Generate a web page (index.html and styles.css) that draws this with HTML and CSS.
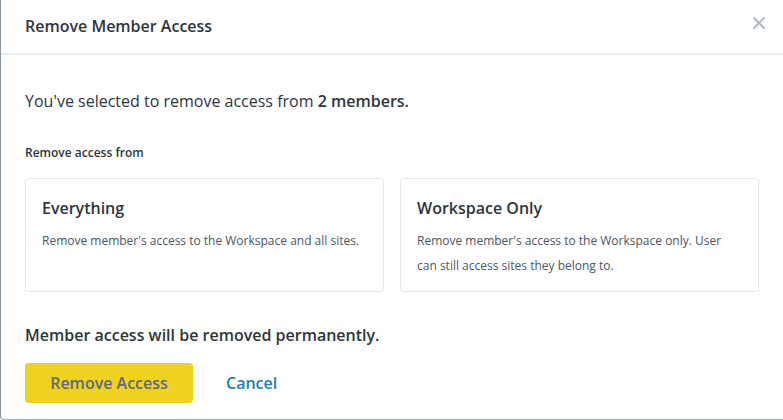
FILE: index.html
```html
<!DOCTYPE html>
<html lang="en">
<head>
<meta charset="utf-8">
<title>Remove Member Access</title>
<link rel="stylesheet" href="styles.css">
</head>
<body>
<div class="modal">
  <div class="modal-header">
    <h2 class="modal-title">Remove Member Access</h2>
    <button class="close-btn" aria-label="Close">
      <svg width="12" height="12" viewBox="0 0 12 12"><path d="M1 1L11 11M11 1L1 11" stroke="#aab6c1" stroke-width="1.8" stroke-linecap="round"/></svg>
    </button>
  </div>
  <div class="modal-body">
    <p class="intro">You've selected to remove access from <strong>2 members.</strong></p>
    <div class="label">Remove access from</div>
    <div class="options">
      <div class="card">
        <div class="card-title">Everything</div>
        <div class="card-desc">Remove member's access to the Workspace and all sites.</div>
      </div>
      <div class="card">
        <div class="card-title">Workspace Only</div>
        <div class="card-desc">Remove member's access to the Workspace only. User can still access sites they belong to.</div>
      </div>
    </div>
    <p class="warning">Member access will be removed permanently.</p>
    <div class="actions">
      <button class="btn-primary">Remove Access</button>
      <button class="btn-link">Cancel</button>
    </div>
  </div>
</div>
</body>
</html>
```
FILE: styles.css
```css
* { box-sizing: border-box; }
html, body { margin: 0; padding: 0; background: #fff; }
body {
  font-family: "Open Sans", "Noto Sans", sans-serif;
  color: #2e353b;
}
.modal {
  width: 783px;
  height: 420px;
  border-left: 1px solid #86929c;
  border-bottom: 1px solid #a3adb5;
  border-bottom-left-radius: 4px;
  background: #fff;
  overflow: hidden;
}
.modal-header {
  height: 55px;
  border-bottom: 2px solid #e9eef0;
  display: flex;
  align-items: center;
  justify-content: space-between;
  padding: 0 17px 0 24px;
}
.modal-title {
  margin: 0;
  font-size: 16px;
  font-weight: 600;
  line-height: 24px;
  color: #2e353b;
  padding-bottom: 1px;
}
.close-btn {
  border: 0;
  background: none;
  padding: 0;
  width: 14px;
  height: 14px;
  display: flex;
  align-items: center;
  justify-content: center;
  margin-bottom: 7px;
}
.modal-body {
  padding: 34px 24px 0 24px;
}
.intro {
  margin: 0;
  font-size: 16px;
  line-height: 24px;
  color: #2e353b;
}
.intro strong { font-weight: 600; }
.label {
  margin-top: 31px;
  font-size: 12px;
  font-weight: 600;
  line-height: 18px;
  color: #2e353b;
}
.options {
  margin-top: 16px;
  display: grid;
  grid-template-columns: 359px 359px;
  gap: 16px;
}
.card {
  border: 1px solid #e3e8ea;
  border-radius: 4px;
  padding: 17px 16px 12px 16px;
  height: 114px;
}
.card-title {
  font-size: 16px;
  font-weight: 600;
  line-height: 24px;
  color: #2e353b;
}
.card-desc {
  margin-top: 8px;
  font-size: 12px;
  line-height: 25px;
  color: #4b555e;
}
.warning {
  margin: 31px 0 0 0;
  font-size: 16px;
  font-weight: 600;
  line-height: 24px;
  color: #2e353b;
}
.actions {
  margin-top: 16px;
  display: flex;
  align-items: center;
  gap: 33px;
}
.btn-primary {
  width: 168px;
  height: 40px;
  border: 0;
  border-radius: 4px;
  background: #f0d11f;
  color: #5e6b77;
  font-family: inherit;
  font-size: 16px;
  font-weight: 600;
}
.btn-link {
  border: 0;
  background: none;
  padding: 0;
  color: #1c7cc0;
  font-family: inherit;
  font-size: 16px;
  font-weight: 600;
}
```
